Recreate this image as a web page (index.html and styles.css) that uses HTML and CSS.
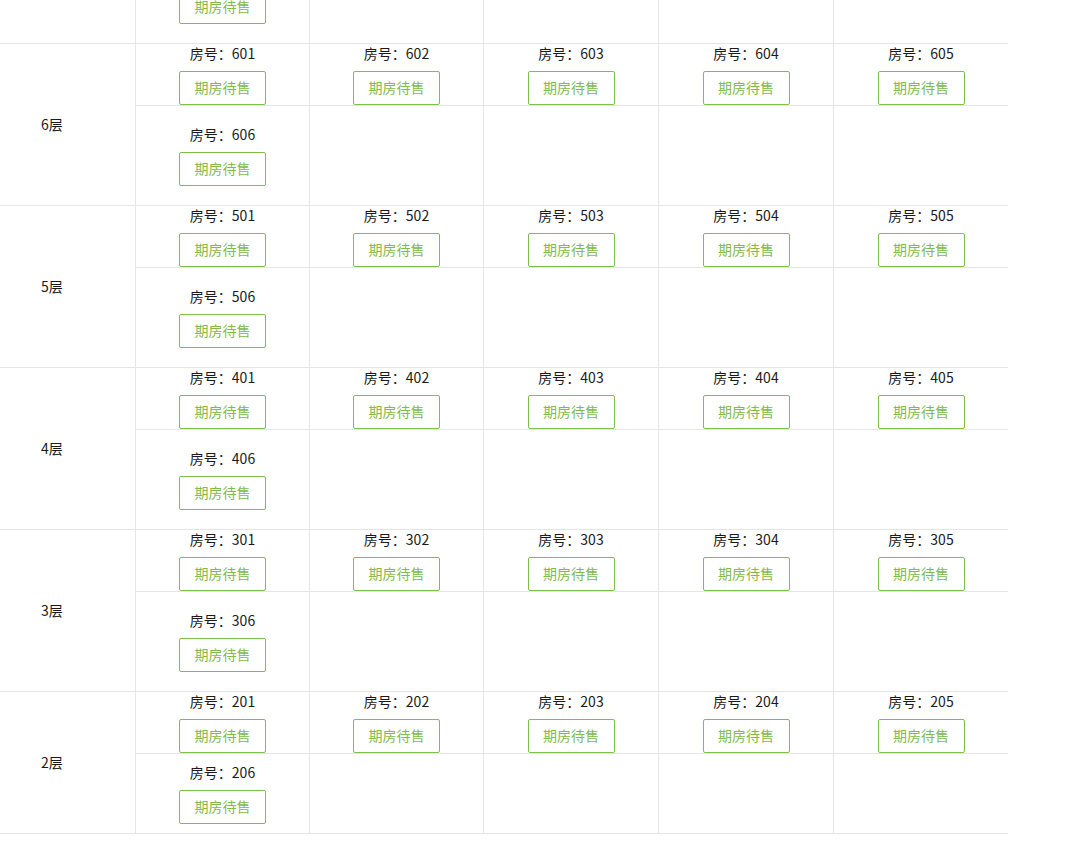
FILE: index.html
```html
<!DOCTYPE html>
<html lang="zh-CN">
<head>
<meta charset="utf-8">
<title>楼层房源</title>
<link rel="stylesheet" href="styles.css">
</head>
<body>
<div class="building">
  <div class="floor">
    <div class="floor-label">7层</div>
    <div class="floor-rooms">
      <div class="room-row">
        <div class="room"><div class="room-no">房号：701</div><button class="btn">期房待售</button></div>
        <div class="room"><div class="room-no">房号：702</div><button class="btn">期房待售</button></div>
        <div class="room"><div class="room-no">房号：703</div><button class="btn">期房待售</button></div>
        <div class="room"><div class="room-no">房号：704</div><button class="btn">期房待售</button></div>
        <div class="room"><div class="room-no">房号：705</div><button class="btn">期房待售</button></div>
      </div>
      <div class="room-row row-tall">
        <div class="room"><div class="room-no">房号：706</div><button class="btn">期房待售</button></div>
        <div class="room"></div><div class="room"></div><div class="room"></div><div class="room"></div>
      </div>
    </div>
  </div>

  <div class="floor">
    <div class="floor-label">6层</div>
    <div class="floor-rooms">
      <div class="room-row">
        <div class="room"><div class="room-no">房号：601</div><button class="btn">期房待售</button></div>
        <div class="room"><div class="room-no">房号：602</div><button class="btn">期房待售</button></div>
        <div class="room"><div class="room-no">房号：603</div><button class="btn">期房待售</button></div>
        <div class="room"><div class="room-no">房号：604</div><button class="btn">期房待售</button></div>
        <div class="room"><div class="room-no">房号：605</div><button class="btn">期房待售</button></div>
      </div>
      <div class="room-row row-tall">
        <div class="room"><div class="room-no">房号：606</div><button class="btn">期房待售</button></div>
        <div class="room"></div><div class="room"></div><div class="room"></div><div class="room"></div>
      </div>
    </div>
  </div>

  <div class="floor">
    <div class="floor-label">5层</div>
    <div class="floor-rooms">
      <div class="room-row">
        <div class="room"><div class="room-no">房号：501</div><button class="btn">期房待售</button></div>
        <div class="room"><div class="room-no">房号：502</div><button class="btn">期房待售</button></div>
        <div class="room"><div class="room-no">房号：503</div><button class="btn">期房待售</button></div>
        <div class="room"><div class="room-no">房号：504</div><button class="btn">期房待售</button></div>
        <div class="room"><div class="room-no">房号：505</div><button class="btn">期房待售</button></div>
      </div>
      <div class="room-row row-tall">
        <div class="room"><div class="room-no">房号：506</div><button class="btn">期房待售</button></div>
        <div class="room"></div><div class="room"></div><div class="room"></div><div class="room"></div>
      </div>
    </div>
  </div>

  <div class="floor">
    <div class="floor-label">4层</div>
    <div class="floor-rooms">
      <div class="room-row">
        <div class="room"><div class="room-no">房号：401</div><button class="btn">期房待售</button></div>
        <div class="room"><div class="room-no">房号：402</div><button class="btn">期房待售</button></div>
        <div class="room"><div class="room-no">房号：403</div><button class="btn">期房待售</button></div>
        <div class="room"><div class="room-no">房号：404</div><button class="btn">期房待售</button></div>
        <div class="room"><div class="room-no">房号：405</div><button class="btn">期房待售</button></div>
      </div>
      <div class="room-row row-tall">
        <div class="room"><div class="room-no">房号：406</div><button class="btn">期房待售</button></div>
        <div class="room"></div><div class="room"></div><div class="room"></div><div class="room"></div>
      </div>
    </div>
  </div>

  <div class="floor">
    <div class="floor-label">3层</div>
    <div class="floor-rooms">
      <div class="room-row">
        <div class="room"><div class="room-no">房号：301</div><button class="btn">期房待售</button></div>
        <div class="room"><div class="room-no">房号：302</div><button class="btn">期房待售</button></div>
        <div class="room"><div class="room-no">房号：303</div><button class="btn">期房待售</button></div>
        <div class="room"><div class="room-no">房号：304</div><button class="btn">期房待售</button></div>
        <div class="room"><div class="room-no">房号：305</div><button class="btn">期房待售</button></div>
      </div>
      <div class="room-row row-tall">
        <div class="room"><div class="room-no">房号：306</div><button class="btn">期房待售</button></div>
        <div class="room"></div><div class="room"></div><div class="room"></div><div class="room"></div>
      </div>
    </div>
  </div>

  <div class="floor">
    <div class="floor-label">2层</div>
    <div class="floor-rooms">
      <div class="room-row">
        <div class="room"><div class="room-no">房号：201</div><button class="btn">期房待售</button></div>
        <div class="room"><div class="room-no">房号：202</div><button class="btn">期房待售</button></div>
        <div class="room"><div class="room-no">房号：203</div><button class="btn">期房待售</button></div>
        <div class="room"><div class="room-no">房号：204</div><button class="btn">期房待售</button></div>
        <div class="room"><div class="room-no">房号：205</div><button class="btn">期房待售</button></div>
      </div>
      <div class="room-row row-short">
        <div class="room"><div class="room-no">房号：206</div><button class="btn">期房待售</button></div>
        <div class="room"></div><div class="room"></div><div class="room"></div><div class="room"></div>
      </div>
    </div>
  </div>
</div>
</body>
</html>
```
FILE: styles.css
```css
html, body {
  margin: 0;
  padding: 0;
  background: #fff;
}
body {
  font-family: "Noto Sans CJK SC", "Noto Sans", sans-serif;
  font-size: 14px;
  color: #1a1a1a;
  overflow: hidden;
}
.building {
  width: 1008px;
  margin-top: -118px;
}
.floor {
  display: flex;
  border-bottom: 1px solid #e5e5e5;
}
.floor-label {
  width: 94px;
  padding-left: 41px;
  padding-bottom: 2px;
  border-right: 1px solid #e5e5e5;
  display: flex;
  align-items: center;
  line-height: 20px;
}
.floor-rooms {
  flex: 1;
  display: flex;
  flex-direction: column;
}
.room-row {
  display: grid;
  grid-template-columns: 174px 174px 175px 175px 1fr;
  height: 61px;
  border-bottom: 1px solid #e5e5e5;
}
.room-row:last-child {
  border-bottom: none;
}
.row-tall {
  height: 99px;
}
.row-short {
  height: 79px;
}
.room {
  display: flex;
  flex-direction: column;
  align-items: center;
  justify-content: center;
  border-right: 1px solid #e5e5e5;
}
.room:last-child {
  border-right: none;
}
.room-no {
  line-height: 19px;
  height: 19px;
}
.btn {
  margin-top: 8px;
  width: 87px;
  height: 34px;
  box-sizing: border-box;
  border: 1px solid #7cbf4b;
  border-radius: 2px;
  background: #fff;
  color: #82bb4a;
  font-family: inherit;
  font-size: 14px;
  line-height: 20px;
  padding: 0 0 3px;
  cursor: pointer;
}
```
